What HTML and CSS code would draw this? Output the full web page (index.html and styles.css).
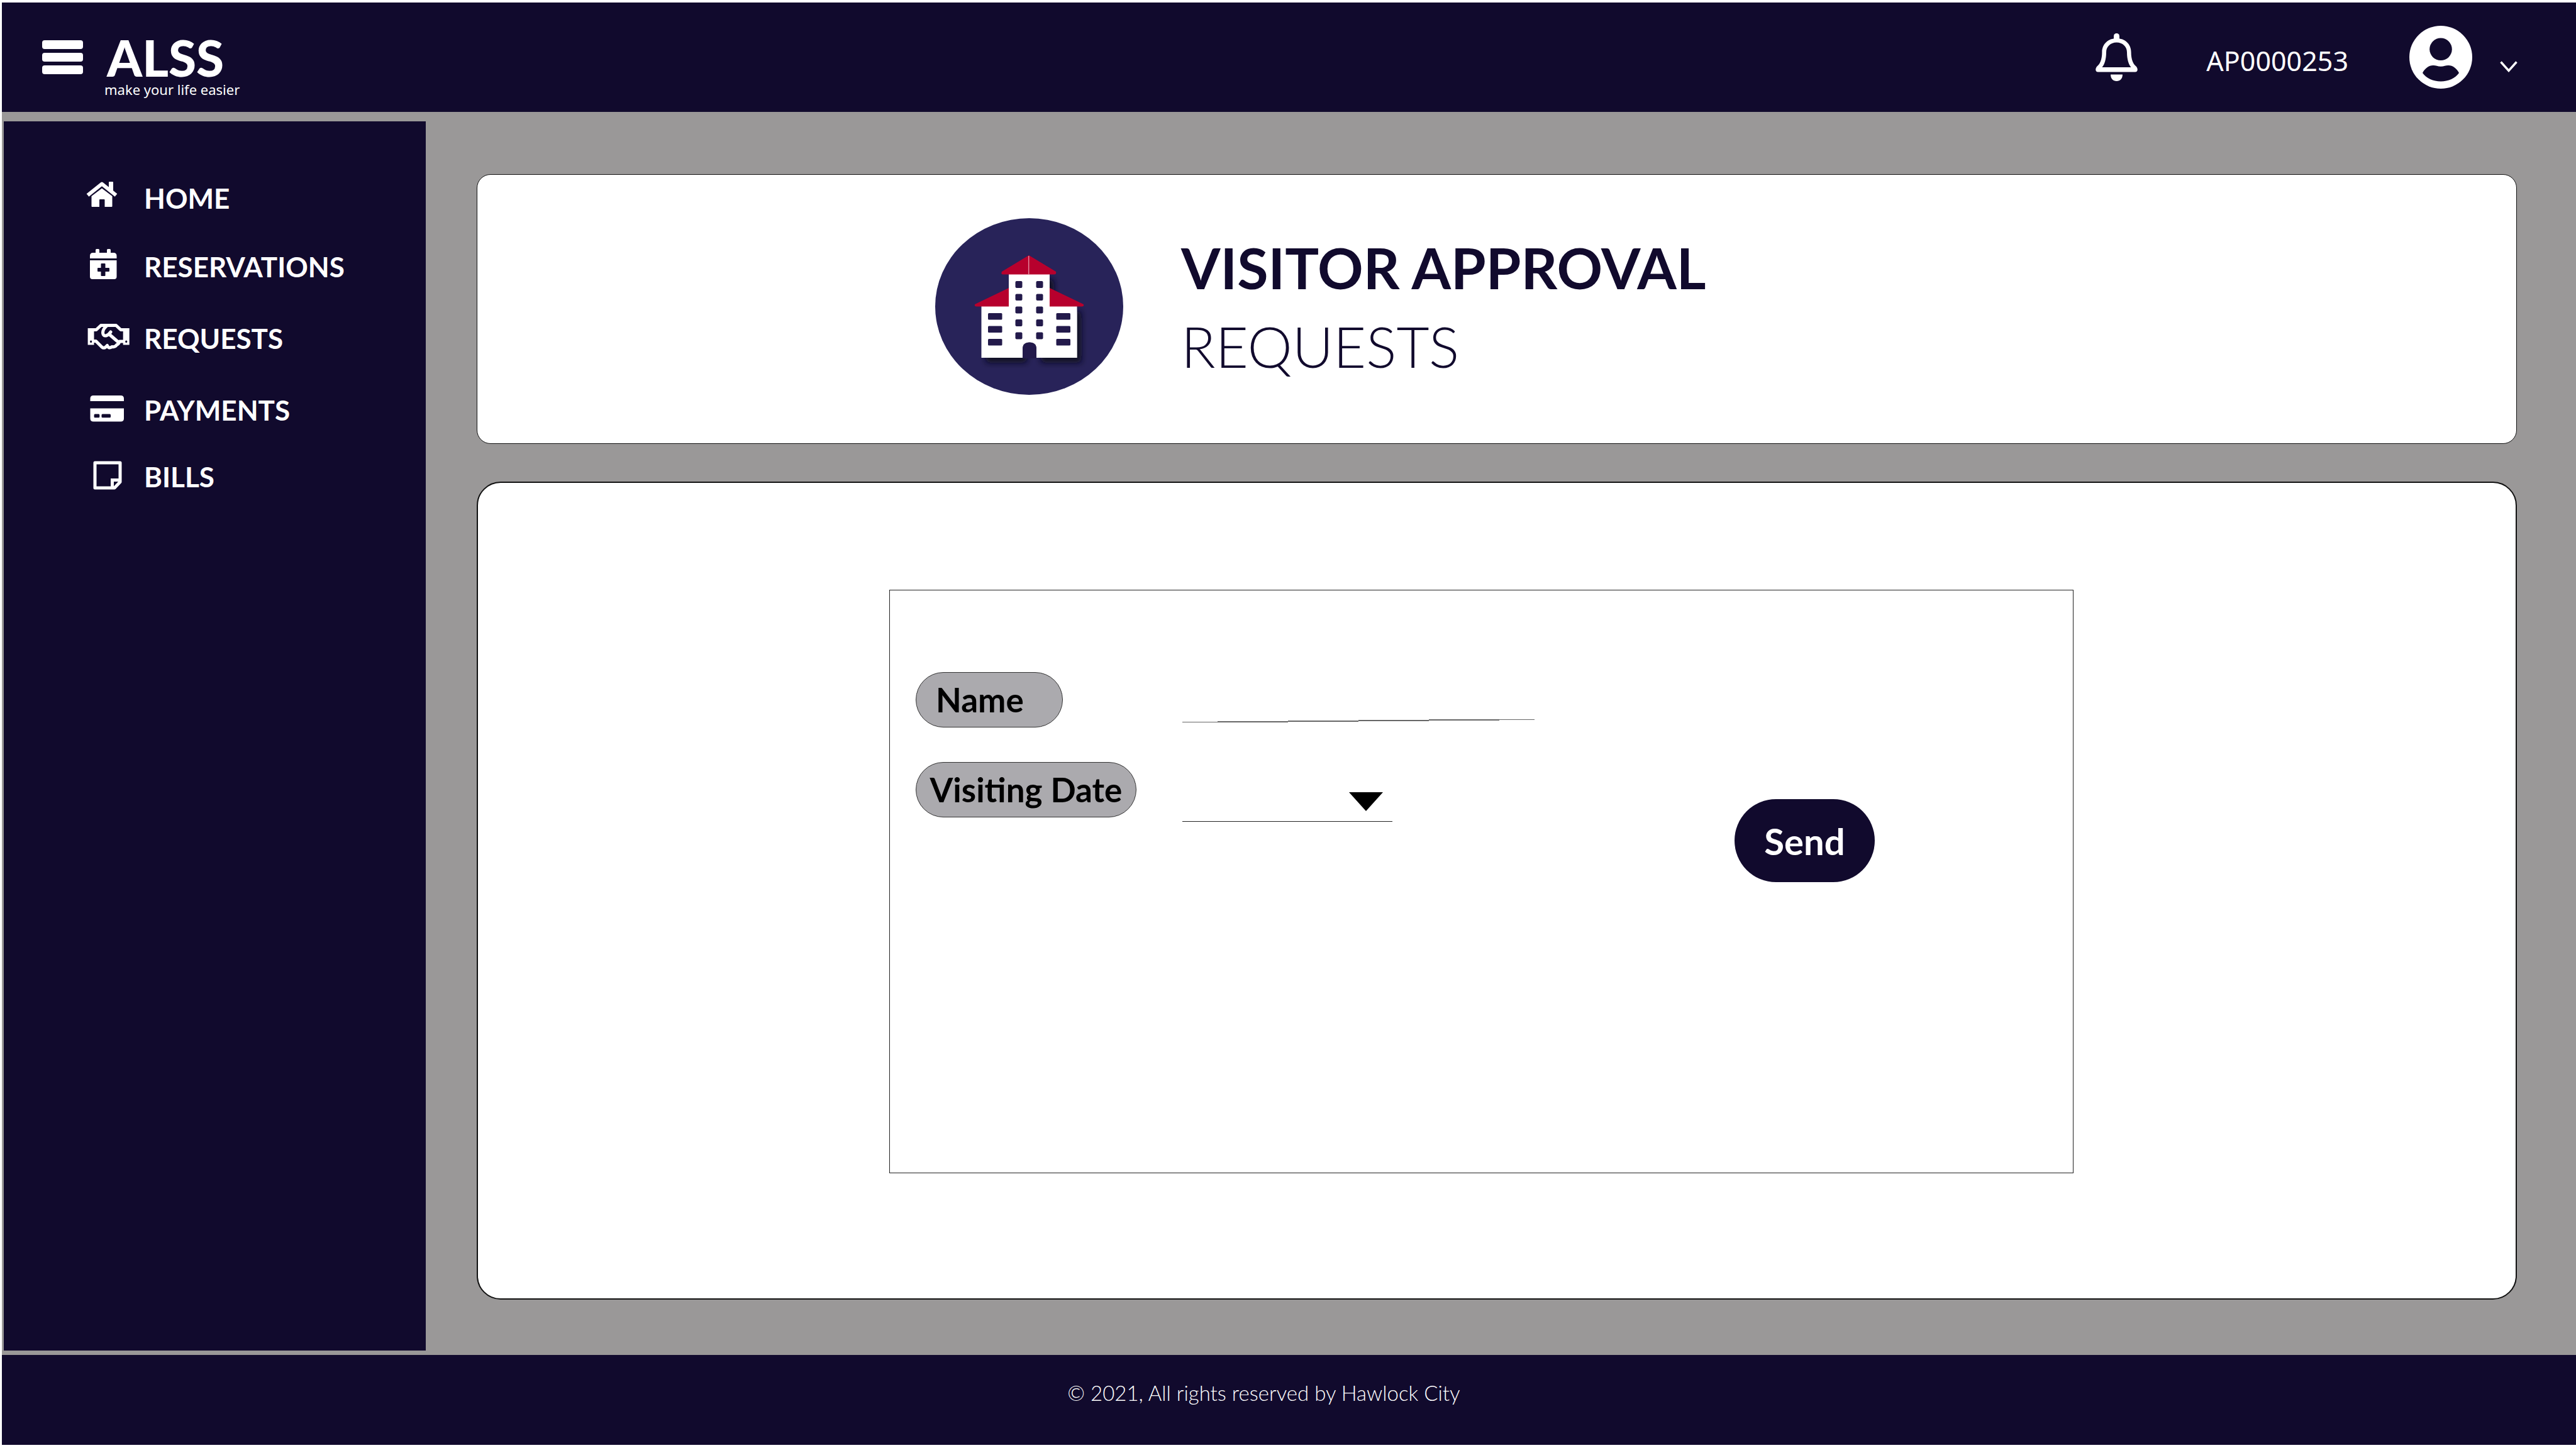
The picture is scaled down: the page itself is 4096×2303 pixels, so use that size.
FILE: index.html
```html
<!DOCTYPE html>
<html lang="en">
<head>
<meta charset="utf-8">
<meta name="viewport" content="width=device-width, initial-scale=1">
<title>ALSS - Visitor approval requests</title>
<link rel="stylesheet" href="styles.css">
</head>
<body>
<header class="topbar">
  <button class="menu-toggle" type="button" aria-label="Open menu">
    <span class="menu-bar"></span>
    <span class="menu-bar"></span>
    <span class="menu-bar"></span>
  </button>
  <div class="brand">
    <span class="brand-name">ALSS</span>
    <span class="brand-tagline">make your life easier</span>
  </div>
  <div class="topbar-tools">
    <button class="icon-button" type="button" aria-label="Notifications">
      <svg width="67" height="76" viewBox="0 0 67 76" fill="currentColor">
        <rect x="29" y="0" width="9" height="14" rx="4.5"/>
        <path fill-rule="evenodd" d="M33.500 8C20 8 10.400 17 10.400 30 10.400 42 7 49 2 53-1 57 0 61.600 4 61.600H63C67 61.600 68 57 65 53 60 49 56.600 42 56.600 30 56.600 17 47 8 33.500 8ZM33.500 14.400C43 14.400 50 21 50 30 50 42 53 50 56.500 54H10.500C14 50 17 42 17 30 17 21 24 14.400 33.500 14.400Z"/>
        <path d="M24 65.500H43C43 72 39 76 33.500 76 28 76 24 72 24 65.500Z"/>
      </svg>
    </button>
    <span class="account-id">AP0000253</span>
    <button class="account-menu" type="button" aria-label="Account">
      <svg width="100" height="100" viewBox="0 0 100 100">
        <circle cx="50" cy="50" r="50" fill="#fff"/>
        <circle cx="50" cy="37.300" r="17.800" fill="#110a2d"/>
        <path fill="#110a2d" d="M21 75C25 67 32 62.500 38.500 63 42 63 45 64.700 50 64.700 55 64.700 58 63 61.500 63 68 62.500 75 67 79 75 73 83.500 62 88.500 50 88.500 38 88.500 27 83.500 21 75Z"/>
      </svg>
      <svg class="chevron" width="28" height="18" viewBox="0 0 28 18" fill="none" stroke="#fff" stroke-width="3.400">
        <path d="M1.500 1.500 14 15.500 26.500 1.500"/>
      </svg>
    </button>
  </div>
</header>

<div class="workspace">
  <nav class="sidebar" aria-label="Main">
    <ul class="nav-list">
      <li>
        <a class="nav-link" href="#home">
          <svg width="70" height="50" viewBox="0 0 70 50" fill="#fff">
            <path d="M36 3Q36 2 37 2H42Q43 2 43 3V20L36 14Z"/>
            <path d="M2.500 23.500 25 5.500 47.500 23.500" fill="none" stroke="#fff" stroke-width="6" stroke-linejoin="round"/>
            <path d="M25 12.500 41.500 25V41Q41.500 42 40.500 42H29.500V31Q29.500 30 28.500 30H22Q21 30 21 31V42H9.500Q8.500 42 8.500 41V25Z"/>
          </svg>
          <span class="nav-label">HOME</span>
        </a>
      </li>
      <li>
        <a class="nav-link" href="#reservations">
          <svg width="70" height="50" viewBox="0 0 70 50" fill="#fff">
            <rect x="15" y="0" width="6" height="9" rx="1.500"/>
            <rect x="33" y="0" width="6" height="9" rx="1.500"/>
            <path d="M6 15V11Q6 6 11 6H43.500Q48.500 6 48.500 11V15Z"/>
            <path fill-rule="evenodd" d="M6 18H48.500V44Q48.500 48 44.500 48H10Q6 48 6 44ZM24.500 23Q23.500 23 23.500 24V30H19Q18 30 18 31V35Q18 36 19 36H23.500V42Q23.500 43 24.500 43H29.500Q30.500 43 30.500 42V36H36Q37 36 37 35V31Q37 30 36 30H30.500V24Q30.500 23 29.500 23Z"/>
          </svg>
          <span class="nav-label">RESERVATIONS</span>
        </a>
      </li>
      <li>
        <a class="nav-link" href="#requests">
          <svg width="70" height="50" viewBox="0 0 70 50" fill="none" stroke="#fff" stroke-width="5" stroke-linejoin="round">
            <path fill="#fff" stroke="none" fill-rule="evenodd" d="M2.600 12H12.500V38.400H2.600ZM7.600 31.500a1.600 1.800 0 1 0 .1 0ZM58.700 12H68.700V38.400H58.700ZM63.700 31.500a1.600 1.800 0 1 0 .1 0Z"/>
            <path d="M11 14.500H16L23.500 7.500H47.500L55 14.500H60"/>
            <path d="M11 32.500H15.500L25 42Q28 44.500 31 42L33.500 39.500Q36 45.500 41 41.500 46 42.500 48.500 38.500 52 37.500 53 33H60"/>
            <path d="M33 8Q26.500 13 26.500 19.500 27 24.500 31.500 24 35.500 23 39 18" stroke-linecap="round"/>
            <path d="M36.500 21.500 51 34"/>
          </svg>
          <span class="nav-label">REQUESTS</span>
        </a>
      </li>
      <li>
        <a class="nav-link" href="#payments">
          <svg width="70" height="50" viewBox="0 0 70 50" fill="#fff">
            <path d="M6.500 14V10Q6.500 5 11.500 5H55Q60 5 60 10V14Z"/>
            <path fill-rule="evenodd" d="M6.500 25.500H60V41.500Q60 46.500 55 46.500H11.500Q6.500 46.500 6.500 41.500ZM14 34.500Q12.600 34.500 12.600 36V39Q12.600 40.300 14 40.300H20Q21.300 40.300 21.300 39V36Q21.300 34.500 20 34.500ZM26 34.500Q24.500 34.500 24.500 36V39Q24.500 40.300 26 40.300H37.500Q39 40.300 39 39V36Q39 34.500 37.500 34.500Z"/>
          </svg>
          <span class="nav-label">PAYMENTS</span>
        </a>
      </li>
      <li>
        <a class="nav-link" href="#bills">
          <svg width="70" height="50" viewBox="0 0 70 50" fill="none" stroke="#fff" stroke-width="5" stroke-linejoin="round">
            <path d="M14 6H54V36.500L45 46H14Z"/>
            <path d="M41.500 46V33.500H54" stroke-linejoin="miter"/>
          </svg>
          <span class="nav-label">BILLS</span>
        </a>
      </li>
    </ul>
  </nav>

  <main class="content">
    <section class="card card-heading">
      <svg class="badge" width="299" height="281" viewBox="0 0 299 281">
        <defs>
          <filter id="shade" x="-20%" y="-20%" width="150%" height="150%">
            <feDropShadow dx="7" dy="8" stdDeviation="5" flood-color="#0c0c1c" flood-opacity=".9"/>
          </filter>
        </defs>
        <ellipse cx="149.500" cy="140.500" rx="149.500" ry="140.500" fill="#282359"/>
        <g filter="url(#shade)">
          <path fill="#fff" d="M117 89H182V140H225.500V222H161V208Q161 197.500 150 197.500 139 197.500 139 208V222H73.500V140H117Z"/>
        </g>
        <g fill="#b7002d">
          <path d="M149 59 192 85Q193 89.500 189 89.500H108Q104 89.500 106 85Z"/>
          <path d="M117 111V140.500H66Q62 140.500 63 137Z"/>
          <path d="M182 111V140.500H233Q237 140.500 236 137Z"/>
        </g>
        <path d="M148.700 60V89.500" stroke="#e58a9f" stroke-width="1.500"/>
        <g fill="#231a4b">
          <path d="M139 223V208Q139 197.500 150 197.500 161 197.500 161 208V223Z"/>
          <rect x="127.500" y="100" width="11" height="11" rx="2"/>
          <rect x="160.500" y="100" width="11" height="11" rx="2"/>
          <rect x="127.500" y="120.500" width="11" height="10.500" rx="2"/>
          <rect x="160.500" y="120.500" width="11" height="10.500" rx="2"/>
          <rect x="127.500" y="140.500" width="11" height="11" rx="2"/>
          <rect x="160.500" y="140.500" width="11" height="11" rx="2"/>
          <rect x="127.500" y="161" width="11" height="11" rx="2"/>
          <rect x="160.500" y="161" width="11" height="11" rx="2"/>
          <rect x="127.500" y="181.500" width="11" height="11" rx="2"/>
          <rect x="160.500" y="181.500" width="11" height="11" rx="2"/>
          <rect x="84" y="151" width="22.500" height="10.500" rx="1.500"/>
          <rect x="84" y="171.500" width="22.500" height="10.500" rx="1.500"/>
          <rect x="84" y="192" width="22.500" height="10.500" rx="1.500"/>
          <rect x="192.500" y="151" width="22.500" height="10.500" rx="1.500"/>
          <rect x="192.500" y="171.500" width="22.500" height="10.500" rx="1.500"/>
          <rect x="192.500" y="192" width="22.500" height="10.500" rx="1.500"/>
        </g>
      </svg>
      <div class="page-heading">
        <h1 class="page-title">VISITOR APPROVAL</h1>
        <p class="page-subtitle">REQUESTS</p>
      </div>
    </section>

    <section class="card card-form">
      <form class="request-form">
        <div class="field-grid">
          <label class="pill pill-name" for="visitor-name">Name</label>
          <input class="text-input" id="visitor-name" name="name" type="text">
          <label class="pill pill-date" for="visiting-date">Visiting Date</label>
          <div class="select-wrap">
            <select class="date-select" id="visiting-date" name="date">
              <option value=""></option>
            </select>
            <svg class="select-arrow" width="54" height="30" viewBox="0 0 54 30">
              <path d="M0 0H54L27 30Z" fill="#000"/>
            </svg>
          </div>
        </div>
        <button class="send-button" type="submit">Send</button>
      </form>
    </section>
  </main>
</div>

<footer class="footer">
  <p class="copyright">© 2021, All rights reserved by Hawlock City</p>
</footer>
</body>
</html>
```

FILE: styles.css
```css
:root {
  --navy: #110a2d;
  --grey: #9a9898;
  --pill: #abaaae;
}

* {
  box-sizing: border-box;
}

body {
  display: flex;
  flex-direction: column;
  min-height: 100vh;
  margin: 0;
  padding: 4px 0 5px 3px;
  background: #fff;
  color: var(--navy);
  font-family: Lato, "Open Sans", sans-serif;
}

button {
  margin: 0;
  padding: 0;
  border: 0;
  background: none;
  color: inherit;
  font: inherit;
}

svg {
  display: block;
  flex: none;
}

/* Top bar */
.topbar {
  display: flex;
  align-items: center;
  height: 174px;
  padding: 0 93px 0 64px;
  background: var(--navy);
  color: #fff;
  font-family: "Noto Sans", sans-serif;
}

.menu-toggle {
  display: flex;
  flex-direction: column;
  gap: 6px;
  width: 65px;
}

.menu-bar {
  height: 14px;
  border-radius: 4px;
  background: #fff;
}

.brand {
  display: flex;
  flex-direction: column;
  align-self: flex-start;
  margin-left: 34px;
  padding-top: 50px;
}

.brand-name {
  padding-left: 4px;
  font-family: Lato, sans-serif;
  font-size: 80px;
  font-weight: 900;
  line-height: 74px;
}

.brand-tagline {
  font-size: 22px;
  line-height: 28px;
}

.topbar-tools {
  display: flex;
  align-items: center;
  margin-left: auto;
}

.account-id {
  margin: 0 97px 0 109px;
  padding-top: 12px;
  font-size: 43px;
  line-height: 52px;
}

.account-menu {
  display: flex;
  gap: 44px;
}

.chevron {
  align-self: flex-end;
  margin-bottom: 26px;
}

/* Body area */
.workspace {
  display: flex;
  flex: 1;
  background: var(--grey);
}

.sidebar {
  width: 671px;
  margin: 15px 0 7px 3px;
  padding-top: 65px;
  background: var(--navy);
}

.nav-list {
  display: grid;
  grid-template-rows: 108px 110px 118px 110px 102px;
  margin: 0;
  padding: 0 0 0 131px;
  list-style: none;
}

.nav-link {
  display: flex;
  align-items: center;
  gap: 22px;
  height: 100%;
  color: #fff;
  text-decoration: none;
}

.nav-label {
  padding-top: 6px;
  font-size: 44px;
  font-weight: 700;
  line-height: 50px;
}

.content {
  display: flex;
  flex: 1;
  flex-direction: column;
  gap: 60px;
  padding: 99px 94px 88px 81px;
}

.card {
  border: 1px solid #111;
  background: #fff;
}

.card-heading {
  display: flex;
  align-items: center;
  gap: 92px;
  height: 429px;
  padding: 0 0 8px 728px;
  border-radius: 22px;
}

.page-title,
.page-subtitle {
  margin: 0;
  font-size: 90px;
  line-height: 125px;
}

.page-title {
  font-weight: 700;
}

.page-subtitle {
  font-weight: 300;
}

.card-form {
  display: flex;
  flex: 1;
  padding: 170px 703px 199px 654px;
  border-width: 2px;
  border-radius: 38px;
}

.request-form {
  display: flex;
  flex: 1;
  align-items: flex-start;
  justify-content: space-between;
  padding: 130px 315px 0 41px;
  border: 1px solid #222;
}

.field-grid {
  display: grid;
  grid-template-columns: 424px 560px;
  align-items: start;
  justify-items: start;
  row-gap: 55px;
}

.pill {
  height: 88px;
  border: 1px solid #333;
  border-radius: 44px;
  background: var(--pill);
  color: #000;
  font-size: 53px;
  font-weight: 700;
  line-height: 86px;
}

.pill-name {
  width: 234px;
  padding-left: 31px;
}

.pill-date {
  width: 351px;
  text-align: center;
}

.text-input,
.date-select {
  width: 100%;
  margin: 0;
  padding: 0 8px;
  border: 0;
  border-radius: 0;
  appearance: none;
  background: none;
  color: #000;
  font-family: inherit;
  font-size: 42px;
}

/* The rule under the name rises slightly towards the right */
.text-input {
  height: 80px;
  background: linear-gradient(to bottom right, transparent calc(50% - 1px), #666 calc(50% - 1px), #666 calc(50% + 1px), transparent calc(50% + 1px)) bottom / 100% 5px no-repeat;
}

.select-wrap {
  position: relative;
  width: 334px;
}

.date-select {
  display: block;
  height: 95px;
  border-bottom: 1px solid #222;
}

.select-arrow {
  position: absolute;
  right: 15px;
  bottom: 17px;
  pointer-events: none;
}

.send-button {
  width: 223px;
  height: 132px;
  margin-top: 202px;
  border-radius: 66px;
  background: var(--navy);
  color: #fff;
  font-size: 58px;
  font-weight: 700;
}

/* Footer */
.footer {
  height: 143px;
  padding: 40px 80px 0 0;
  background: var(--navy);
  color: #fff;
  text-align: center;
}

.copyright {
  margin: 0;
  font-size: 33px;
  font-weight: 300;
  line-height: 40px;
}
```
